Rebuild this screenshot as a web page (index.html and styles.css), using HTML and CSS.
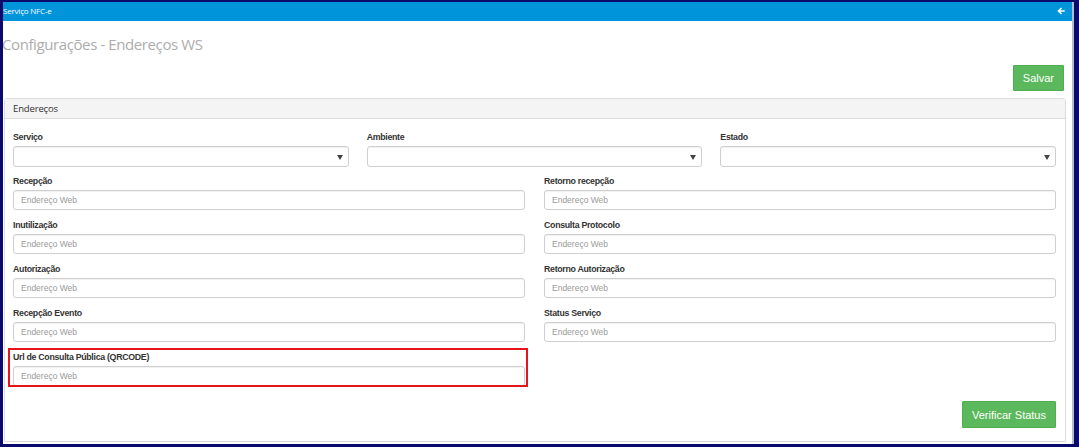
FILE: index.html
```html
<!DOCTYPE html>
<html lang="pt-BR">
<head>
<meta charset="utf-8">
<title>Serviço NFC-e</title>
<link rel="stylesheet" href="styles.css">
</head>
<body>
<div class="app">
  <header class="topbar">
    <span class="topbar-title">Serviço NFC-e</span>
    <svg class="back-icon" width="8" height="8" viewBox="0 0 8 8" aria-hidden="true">
      <path d="M0.3 4 L4 0.4 L5.1 1.5 L3.3 3.2 L7.7 3.2 L7.7 4.8 L3.3 4.8 L5.1 6.5 L4 7.6 Z" fill="#fff"/>
    </svg>
  </header>
  <main class="content">
    <h1 class="page-title">Configurações - Endereços WS</h1>
    <div class="toolbar">
      <button class="btn btn-success">Salvar</button>
    </div>
    <section class="panel">
      <div class="panel-heading">Endereços</div>
      <div class="panel-body">
        <div class="row row-3 row-select">
          <div class="field">
            <label class="lbl">Serviço</label>
            <div class="select"><span class="caret"></span></div>
          </div>
          <div class="field">
            <label class="lbl">Ambiente</label>
            <div class="select"><span class="caret"></span></div>
          </div>
          <div class="field">
            <label class="lbl">Estado</label>
            <div class="select"><span class="caret"></span></div>
          </div>
        </div>
        <div class="row row-2">
          <div class="field">
            <label class="lbl">Recepção</label>
            <input class="input" placeholder="Endereço Web">
          </div>
          <div class="field">
            <label class="lbl">Retorno recepção</label>
            <input class="input" placeholder="Endereço Web">
          </div>
        </div>
        <div class="row row-2">
          <div class="field">
            <label class="lbl">Inutilização</label>
            <input class="input" placeholder="Endereço Web">
          </div>
          <div class="field">
            <label class="lbl">Consulta Protocolo</label>
            <input class="input" placeholder="Endereço Web">
          </div>
        </div>
        <div class="row row-2">
          <div class="field">
            <label class="lbl">Autorização</label>
            <input class="input" placeholder="Endereço Web">
          </div>
          <div class="field">
            <label class="lbl">Retorno Autorização</label>
            <input class="input" placeholder="Endereço Web">
          </div>
        </div>
        <div class="row row-2">
          <div class="field">
            <label class="lbl">Recepção Evento</label>
            <input class="input" placeholder="Endereço Web">
          </div>
          <div class="field">
            <label class="lbl">Status Serviço</label>
            <input class="input" placeholder="Endereço Web">
          </div>
        </div>
        <div class="row row-2 row-last">
          <div class="field highlighted">
            <label class="lbl">Url de Consulta Pública (QRCODE)</label>
            <input class="input" placeholder="Endereço Web">
            <div class="highlight-box"></div>
          </div>
        </div>
        <div class="actions">
          <button class="btn btn-success btn-status">Verificar Status</button>
        </div>
      </div>
    </section>
  </main>
</div>
</body>
</html>
```
FILE: styles.css
```css
html, body {
  margin: 0;
  height: 100%;
  overflow: hidden;
}
body {
  background: #0a0a6c;
  padding: 2px 5px 3px 3px;
  box-sizing: border-box;
  font-family: "Liberation Sans", Arial, sans-serif;
  color: #333;
}
.app {
  background: #fff;
  height: 100%;
  border-right: 2px solid #b4bccf;
  box-sizing: border-box;
  display: flex;
  flex-direction: column;
  overflow: hidden;
}
.topbar {
  height: 19px;
  flex: none;
  background: #0095da;
  display: flex;
  align-items: center;
  justify-content: space-between;
  padding: 0 7px 0 0;
}
.topbar-title {
  font-family: "Open Sans", sans-serif;
  font-size: 8px;
  color: #fff;
  letter-spacing: -0.2px;
  margin-bottom: 2px;
}
.back-icon {
  display: block;
  margin-bottom: 2px;
}
.content {
  padding: 0 6px 0 1px;
}
.page-title {
  margin: 12px 0 0 -2px;
  font-family: "Open Sans", sans-serif;
  font-weight: 400;
  font-size: 15px;
  line-height: 22px;
  color: #adadad;
  letter-spacing: -0.4px;
}
.toolbar {
  display: flex;
  justify-content: flex-end;
  margin-top: 10px;
  padding-right: 2px;
}
.btn {
  font-family: "Liberation Sans", Arial, sans-serif;
  font-size: 11px;
  color: #fff;
  border: 1px solid #4cae4c;
  background: #5cb85c;
  border-radius: 1px;
  height: 26px;
  padding: 0 9px;
  cursor: pointer;
}
.panel {
  margin-top: 7px;
  border: 1px solid #dcdcdc;
  border-radius: 3px 3px 0 0;
}
.panel-heading {
  height: 19px;
  background: #f4f4f4;
  border-bottom: 1px solid #dcdcdc;
  font-family: "Open Sans", sans-serif;
  font-size: 9.5px;
  line-height: 19px;
  padding-left: 8px;
  color: #333;
  letter-spacing: -0.15px;
}
.panel-body {
  padding: 12px 9px 13px 8px;
}
.row {
  display: grid;
  margin-bottom: 9px;
}
.row-select {
  margin-bottom: 8px;
}
.row-3 {
  grid-template-columns: 1fr 1fr 1fr;
  column-gap: 18px;
}
.row-2 {
  grid-template-columns: 1fr 1fr;
  column-gap: 19px;
}
.row-last {
  margin-bottom: 0;
}
.field {
  display: flex;
  flex-direction: column;
  min-width: 0;
}
.lbl {
  font-size: 8.8px;
  font-weight: 700;
  line-height: 12px;
  height: 12px;
  margin-bottom: 3px;
  color: #333;
  letter-spacing: -0.3px;
}
.select {
  height: 21px;
  box-sizing: border-box;
  border: 1px solid #cfcfcf;
  border-radius: 3px;
  box-shadow: inset 0 1px 1px rgba(0,0,0,0.06);
  display: flex;
  align-items: center;
  justify-content: flex-end;
  padding-right: 5px;
  padding-top: 1px;
}
.caret {
  width: 0;
  height: 0;
  border-left: 3px solid transparent;
  border-right: 3px solid transparent;
  border-top: 5px solid #444;
}
.input {
  height: 20px;
  box-sizing: border-box;
  border: 1px solid #cfcfcf;
  border-radius: 3px;
  box-shadow: inset 0 1px 1px rgba(0,0,0,0.06);
  padding: 0 7px;
  font-family: "Liberation Sans", Arial, sans-serif;
  font-size: 8.5px;
  color: #555;
  margin: 0;
  width: 100%;
  outline: none;
}
.input::placeholder {
  color: #9a9a9a;
}
.highlighted {
  position: relative;
}
.highlight-box {
  position: absolute;
  left: -5px;
  top: -3px;
  right: -3px;
  bottom: -1px;
  border: 2px solid #e8141c;
  pointer-events: none;
}
.actions {
  display: flex;
  justify-content: flex-end;
  margin-top: 15px;
}
.btn-status {
  height: 27px;
  padding: 0 9px;
}
```
